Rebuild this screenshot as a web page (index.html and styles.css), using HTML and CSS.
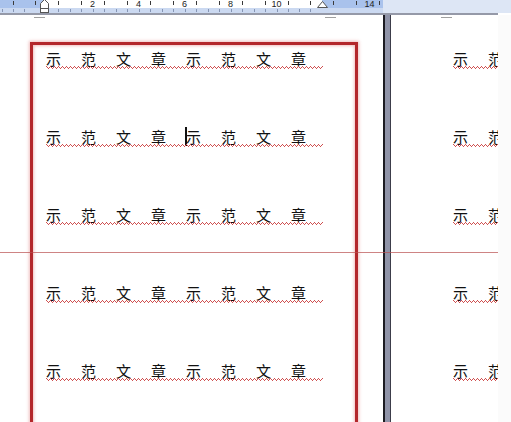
FILE: index.html
```html
<!DOCTYPE html>
<html lang="zh">
<head>
<meta charset="utf-8">
<title>示范文章</title>
<link rel="stylesheet" href="styles.css">
</head>
<body>
<div class="ruler">
  <svg class="ruler-svg" width="511" height="15" viewBox="0 0 511 15">
    <rect x="0" y="0" width="511" height="13" fill="#dde6f5"/>
    <rect x="0" y="0" width="383" height="8" fill="#a9c2ec"/>
    <rect x="44" y="0" width="278" height="8" fill="#ffffff"/>
    <rect x="0" y="8" width="383" height="5" fill="#cbd9f1"/>
    <rect x="0" y="13" width="498" height="2" fill="#9599a8"/>
    <g stroke="#3a3a3a" stroke-width="1">
      <line x1="13.5" y1="1" x2="13.5" y2="5"/>
      <line x1="35.5" y1="1" x2="35.5" y2="5"/>
      <line x1="58.5" y1="1" x2="58.5" y2="5"/>
      <line x1="81.5" y1="1" x2="81.5" y2="5"/>
      <line x1="104.5" y1="1" x2="104.5" y2="5"/>
      <line x1="127.5" y1="1" x2="127.5" y2="5"/>
      <line x1="150.5" y1="1" x2="150.5" y2="5"/>
      <line x1="173.5" y1="1" x2="173.5" y2="5"/>
      <line x1="196.5" y1="1" x2="196.5" y2="5"/>
      <line x1="219.5" y1="1" x2="219.5" y2="5"/>
      <line x1="242.5" y1="1" x2="242.5" y2="5"/>
      <line x1="265.5" y1="1" x2="265.5" y2="5"/>
      <line x1="288.5" y1="1" x2="288.5" y2="5"/>
      <line x1="310.5" y1="1" x2="310.5" y2="5"/>
      <line x1="333.5" y1="1" x2="333.5" y2="5"/>
      <line x1="356.5" y1="1" x2="356.5" y2="5"/>
      <line x1="379.5" y1="1" x2="379.5" y2="5"/>
    </g>
    <g stroke="#8595b4" stroke-width="1">
      <line x1="2.5" y1="9" x2="2.5" y2="12"/>
      <line x1="13.5" y1="9" x2="13.5" y2="12"/>
      <line x1="24.5" y1="9" x2="24.5" y2="12"/>
      <line x1="58.5" y1="9" x2="58.5" y2="12"/>
      <line x1="70.5" y1="9" x2="70.5" y2="12"/>
      <line x1="81.5" y1="9" x2="81.5" y2="12"/>
      <line x1="93.5" y1="9" x2="93.5" y2="12"/>
      <line x1="104.5" y1="9" x2="104.5" y2="12"/>
      <line x1="116.5" y1="9" x2="116.5" y2="12"/>
      <line x1="127.5" y1="9" x2="127.5" y2="12"/>
      <line x1="139.5" y1="9" x2="139.5" y2="12"/>
      <line x1="150.5" y1="9" x2="150.5" y2="12"/>
      <line x1="162.5" y1="9" x2="162.5" y2="12"/>
      <line x1="173.5" y1="9" x2="173.5" y2="12"/>
      <line x1="185.5" y1="9" x2="185.5" y2="12"/>
      <line x1="196.5" y1="9" x2="196.5" y2="12"/>
      <line x1="208.5" y1="9" x2="208.5" y2="12"/>
      <line x1="219.5" y1="9" x2="219.5" y2="12"/>
      <line x1="231.5" y1="9" x2="231.5" y2="12"/>
      <line x1="242.5" y1="9" x2="242.5" y2="12"/>
      <line x1="254.5" y1="9" x2="254.5" y2="12"/>
      <line x1="265.5" y1="9" x2="265.5" y2="12"/>
      <line x1="277.5" y1="9" x2="277.5" y2="12"/>
      <line x1="288.5" y1="9" x2="288.5" y2="12"/>
      <line x1="299.5" y1="9" x2="299.5" y2="12"/>
      <line x1="310.5" y1="9" x2="310.5" y2="12"/>
    </g>
    <g class="ruler-num" fill="#222" text-anchor="middle">
      <text x="92.5" y="6.5">2</text>
      <text x="138.5" y="6.5">4</text>
      <text x="184.5" y="6.5">6</text>
      <text x="230.5" y="6.5">8</text>
      <text x="276.5" y="6.5">10</text>
      <text x="369.5" y="6.5">14</text>
    </g>
    <polygon points="40.5,8.5 40.5,3.5 44.5,-0.5 48.5,3.5 48.5,8.5" fill="#fff" stroke="#555" stroke-width="1"/>
    <rect x="40.5" y="8.5" width="8" height="4" fill="#fff" stroke="#555" stroke-width="1"/>
    <polygon points="317.5,7.5 322.5,1.5 327.5,7.5" fill="#fff" stroke="#555" stroke-width="1"/>
  </svg>
</div>

<div class="workspace">
  <div class="page page-left">
    <div class="marks marks-left">
      <span class="mark"></span>
      <span class="mark"></span>
    </div>
    <div class="frame">
      <div class="lines">
        <p class="line">示范文章示范文章</p>
        <p class="line">示范文章示范文章<span class="cursor"></span></p>
        <p class="line">示范文章示范文章</p>
        <p class="line">示范文章示范文章</p>
        <p class="line">示范文章示范文章</p>
      </div>
    </div>
  </div>
  <div class="divider"></div>
  <div class="page page-right">
    <div class="marks marks-right">
      <span class="mark"></span>
    </div>
    <div class="lines lines-right">
      <p class="line">示范文章示范文章</p>
      <p class="line">示范文章示范文章</p>
      <p class="line">示范文章示范文章</p>
      <p class="line">示范文章示范文章</p>
      <p class="line">示范文章示范文章</p>
    </div>
  </div>
  <div class="edge"></div>
  <div class="guide"></div>
</div>
</body>
</html>
```

FILE: styles.css
```css
html, body {
  margin: 0;
  padding: 0;
  background: #ffffff;
}

body {
  width: 511px;
  height: 422px;
  overflow: hidden;
  font-family: "Noto Sans CJK SC", "Noto Sans CJK JP", sans-serif;
}

.ruler {
  height: 15px;
  line-height: 0;
}

.ruler-svg {
  display: block;
}

.ruler-num {
  font-family: "Liberation Sans", Arial, sans-serif;
  font-size: 9px;
}

.workspace {
  position: relative;
  display: flex;
  height: 407px;
  overflow: hidden;
}

.page {
  background: #ffffff;
  overflow: hidden;
}

.page-left {
  width: 383px;
  flex: 0 0 383px;
}

.page-right {
  width: 107px;
  flex: 0 0 107px;
}

.edge {
  flex: 1 1 auto;
  background: #fbfbfb;
}

.divider {
  flex: 0 0 8px;
  box-sizing: border-box;
  background: #9094a8;
  border-left: 2px solid #1c1c22;
  border-right: 1px solid #3c3d4a;
}

.marks {
  display: flex;
  padding-top: 2px;
  height: 1px;
}

.marks-left {
  padding-left: 34px;
  gap: 280px;
}

.marks-right {
  padding-left: 50px;
}

.mark {
  display: block;
  width: 11px;
  height: 1px;
  background: #a0a0a0;
}

.frame {
  margin: 24px 0 0 30px;
  width: 328px;
  height: 420px;
  box-sizing: border-box;
  border: 3px solid #b3272b;
  padding: 4px 0 0 13px;
  box-shadow: 0 0 3px 1px rgba(220, 110, 110, 0.45),
              inset 0 0 3px 1px rgba(220, 110, 110, 0.45);
}

.lines {
  display: flex;
  flex-direction: column;
  gap: 58px;
}

.lines-right {
  padding: 31px 0 0 62px;
}

.line {
  position: relative;
  margin: 0;
  height: 20px;
  font-size: 15px;
  line-height: 20px;
  letter-spacing: 20px;
  color: #111;
  white-space: nowrap;
}

.line::after {
  content: "";
  position: absolute;
  left: 0;
  top: 17px;
  width: 277px;
  height: 3px;
  background-image:
    repeating-linear-gradient(90deg, #cf5050 0 1px, transparent 1px 4px),
    repeating-linear-gradient(90deg, transparent 0 1px, #cf5050 1px 2px, transparent 2px 3px, #cf5050 3px 4px),
    repeating-linear-gradient(90deg, transparent 0 2px, #cf5050 2px 3px, transparent 3px 4px);
  background-size: 100% 1px;
  background-position: 0 0, 0 1px, 0 2px;
  background-repeat: no-repeat;
}

.cursor {
  position: absolute;
  left: 139px;
  top: 0;
  width: 2px;
  height: 19px;
  background: #111;
}

.guide {
  position: absolute;
  left: 0;
  top: 237px;
  width: 498px;
  height: 1px;
  background: rgba(185, 80, 80, 0.7);
}
```
